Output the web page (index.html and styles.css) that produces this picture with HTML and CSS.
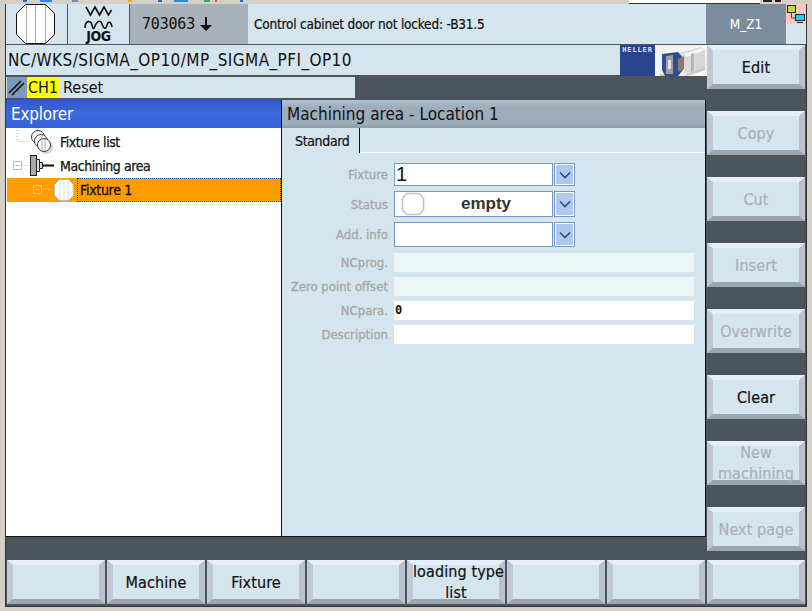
FILE: index.html
```html
<!DOCTYPE html>
<html lang="en">
<head>
    <title>Machining area</title>
    <link rel="stylesheet" href="styles.css">
</head>
<body>
    <svg class="strip" width="812" height="4" viewBox="0 0 812 4">
        <rect x="23" width="4" height="2" fill="#2a6ad0"/>
        <rect x="40" width="12" height="2" fill="#2a8ae8"/>
        <rect x="72" width="6" height="2" fill="#7a90b8"/>
        <rect x="128" width="4" height="2" fill="#f0a820"/>
        <rect x="158" width="4" height="2" fill="#3060c0"/>
        <rect x="174" width="14" height="2" fill="#2a8ae8"/>
        <rect x="204" width="6" height="2" fill="#40a060"/>
        <rect x="215" width="2" height="2" fill="#e06030"/>
        <rect x="240" width="3" height="2" fill="#2a6ad0"/>
        <rect x="629" y="0" width="131" height="3" fill="#fff"/>
        <rect x="629" y="3" width="131" height="1" fill="#333"/>
        <rect x="763" width="9" height="2" fill="#222"/>
        <rect x="775" width="6" height="2" fill="#401010"/>
    </svg>

    <div class="window">
        <div class="topbar">
            <div class="cell cell-fixture">
                <svg width="42" height="40" viewBox="0 0 42 40">
                    <path d="M10.5 .5h20l9 9v21l-9 9h-20l-9-9v-21z" fill="#fff" stroke="#111"/>
                    <path d="M11.5 1v38M20.5 1v38M30.5 1v38" stroke="#aaa"/>
                </svg>
            </div>
            <div class="cell cell-jog">
                <svg class="jog-wave" width="30" height="25" viewBox="0 0 30 25">
                    <path d="M2 2l4.500 8 4.500-8 4.500 8 4.500-8 4.500 8 3-5" fill="none" stroke="#111" stroke-width="1.600"/>
                    <path d="M1 23c0-8 6-8 7-3s2 4 3 1 5-8 7-2 4 5 5 1 4-4 5 2" fill="none" stroke="#111" stroke-width="1.600"/>
                </svg>
                <span class="jog-text">JOG</span>
            </div>
            <div class="cell cell-number">
                <span class="number">703063</span>
                <svg width="12" height="14" viewBox="0 0 12 14"><path d="M5 0h2v8h5l-6 6-6-6h5z" fill="#111"/></svg>
            </div>
            <div class="cell cell-message">Control cabinet door not locked: -B31.5</div>
            <div class="cell cell-user">M_Z1</div>
            <div class="cell cell-net">
                <svg width="20" height="20" viewBox="0 0 20 20">
                    <rect width="20" height="20" fill="#ffc4c4"/>
                    <rect x="1.5" y="1.5" width="8" height="7" fill="#b4e040" stroke="#222"/>
                    <path d="M5.500 9v5h4" fill="none" stroke="#d01010"/>
                    <rect x="9.500" y="10.500" width="9" height="6" fill="#10d8f0" stroke="#222"/>
                    <path d="M11 18.500h6" stroke="#222"/>
                </svg>
            </div>
        </div>

        <div class="middle">
            <div class="work">
                <div class="pathrow">
                    <span class="path">NC/WKS/SIGMA_OP10/MP_SIGMA_PFI_OP10</span>
                    <div class="logo">
                        <div class="logo-blue">HELLER</div>
                        <svg class="logo-pic" width="52" height="31" viewBox="0 0 52 31">
                            <rect width="52" height="31" fill="#f4f4f4"/>
                            <path d="M4 29l24 2 22-10v4l-18 6H6z" fill="#c8c8c8"/>
                            <path d="M24 8l22-6 4 3v17l-20 7z" fill="#d8d8d8"/>
                            <path d="M28 9l18-6 4 2-18 7z" fill="#f4f4f4"/>
                            <path d="M36 9l3-1v18l-3 1z" fill="#b4b4b4"/>
                            <path d="M7 9l16-2 5 6v12l-5 6H10l-3-6z" fill="#2c4f9c"/>
                            <path d="M11 11l7-1v19h-7z" fill="#a89c98"/>
                            <path d="M13 15h3v9h-3z" fill="#e4e4e4"/>
                            <path d="M23 14l6-3v13l-6 3z" fill="#8a7a70"/>
                        </svg>
                    </div>
                </div>

                <div class="statusrow">
                    <span class="slash">
                        <svg width="19" height="21" viewBox="0 0 19 21"><path d="M2 16L14 4M5 18L17 6" stroke="#111" stroke-width="1.600"/></svg>
                    </span>
                    <span class="channel">CH1</span>
                    <span class="reset">Reset</span>
                </div>

                <div class="panes">
                    <div class="explorer">
                        <div class="explorer-title">Explorer</div>
                        <ul class="tree">
                            <li class="tree-row">
                                <svg width="50" height="24" viewBox="0 0 50 24">
                                    <path d="M7 0v11.500h13" fill="none" stroke="#bbb" stroke-dasharray="1 2"/>
                                    <circle cx="36" cy="17" r="7" fill="#aaa" opacity=".5"/>
                                    <circle cx="28" cy="7" r="6.500" fill="#fff" stroke="#333"/>
                                    <circle cx="31" cy="11" r="6.500" fill="#fff" stroke="#333"/>
                                    <circle cx="34" cy="15" r="6.500" fill="#fff" stroke="#333"/>
                                    <path d="M32 9v12M35 9v12" stroke="#aaa"/>
                                </svg>
                                <span class="tree-text">Fixture list</span>
                            </li>
                            <li class="tree-row">
                                <svg width="50" height="24" viewBox="0 0 50 24">
                                    <rect x="3.500" y="7.500" width="8" height="8" fill="#fff" stroke="#bbb"/>
                                    <path d="M5.500 11.500h4" stroke="#bbb"/>
                                    <path d="M12 11.500h8" stroke="#bbb" stroke-dasharray="1 2"/>
                                    <rect x="20.500" y="1.500" width="6" height="20" fill="#aaa" stroke="#222"/>
                                    <path d="M26.500 5.500h3v12h-3zM29.500 8.500h3v6h-3z" fill="#ddd" stroke="#222"/>
                                    <path d="M32 11.500h12" stroke="#111" stroke-width="2"/>
                                </svg>
                                <span class="tree-text">Machining area</span>
                            </li>
                            <li class="tree-row tree-row-active">
                                <svg width="70" height="24" viewBox="0 0 70 24">
                                    <path d="M31 0v7" stroke="#ddb070" stroke-dasharray="1 2"/>
                                    <rect x="26.500" y="7.500" width="8" height="8" fill="none" stroke="#ffc880"/>
                                    <path d="M28.500 11.500h4" stroke="#ffc880"/>
                                    <path d="M35 11.500h10" stroke="#ffc880" stroke-dasharray="1 2"/>
                                    <path d="M52.500 1.500h9l5 5v11l-5 5h-9l-5-5v-11z" fill="#fff" stroke="#bbb"/>
                                    <path d="M53 2v20M57 2v20M61 2v20" stroke="#ddd"/>
                                </svg>
                                <span class="focus">Fixture 1</span>
                            </li>
                        </ul>
                    </div>

                    <div class="details">
                        <div class="details-title">Machining area - Location 1</div>
                        <div class="tabs">
                            <span class="tab">Standard</span>
                            <span class="tab-rest"></span>
                        </div>
                        <div class="form">
                            <div class="field field-select">
                                <label class="field-label">Fixture</label>
                                <div class="select"><span class="select-value select-big">1</span></div>
                                <span class="select-btn"><svg width="12" height="8" viewBox="0 0 12 8"><path d="M1 1.500l5 5 5-5" fill="none" stroke="#2c4a80" stroke-width="1.600"/></svg></span>
                            </div>
                            <div class="field field-select field-status">
                                <label class="field-label">Status</label>
                                <div class="select">
                                    <svg class="status-icon" width="24" height="24" viewBox="0 0 24 24"><path d="M6 1.500h12l4.500 4.500v12l-4.500 4.500h-12l-4.500-4.500v-12z" fill="#fff" stroke="#bcc4cc" stroke-width="1.600"/></svg>
                                    <span class="select-value select-bold">empty</span>
                                </div>
                                <span class="select-btn"><svg width="12" height="8" viewBox="0 0 12 8"><path d="M1 1.500l5 5 5-5" fill="none" stroke="#2c4a80" stroke-width="1.600"/></svg></span>
                            </div>
                            <div class="field field-select field-info">
                                <label class="field-label">Add. info</label>
                                <div class="select"></div>
                                <span class="select-btn"><svg width="12" height="8" viewBox="0 0 12 8"><path d="M1 1.500l5 5 5-5" fill="none" stroke="#2c4a80" stroke-width="1.600"/></svg></span>
                            </div>
                            <div class="plain-fields">
                                <div class="field">
                                    <label class="field-label">NCprog.</label>
                                    <div class="box box-off"></div>
                                </div>
                                <div class="field">
                                    <label class="field-label">Zero point offset</label>
                                    <div class="box box-off"></div>
                                </div>
                                <div class="field">
                                    <label class="field-label">NCpara.</label>
                                    <div class="box"><span class="zero">0</span></div>
                                </div>
                                <div class="field">
                                    <label class="field-label">Description</label>
                                    <div class="box"></div>
                                </div>
                            </div>
                        </div>
                    </div>
                </div>
            </div>

            <div class="softkeys-right">
                <button class="softkey">Edit</button>
                <button class="softkey off">Copy</button>
                <button class="softkey off">Cut</button>
                <button class="softkey off">Insert</button>
                <button class="softkey off">Overwrite</button>
                <button class="softkey">Clear</button>
                <button class="softkey off"><span class="two-lines">New<br>machining</span></button>
                <button class="softkey off">Next page</button>
            </div>
        </div>

        <div class="softkeys-bottom">
            <button class="softkey"></button>
            <button class="softkey">Machine</button>
            <button class="softkey">Fixture</button>
            <button class="softkey"></button>
            <button class="softkey"><span class="two-lines">loading type<br>list</span></button>
            <button class="softkey"></button>
            <button class="softkey"></button>
            <button class="softkey"></button>
        </div>
    </div>
</body>
</html>
```

FILE: styles.css
```css
* {
    box-sizing: border-box;
    margin: 0;
    padding: 0;
}

body {
    background-color: #d4d0c8;
    font-family: "DejaVu Sans Condensed", "DejaVu Sans", sans-serif;
    font-stretch: condensed;
    font-size: 14px;
    color: #111;
    overflow: hidden;
}

.strip {
    display: block;
}

.window {
    width: 802px;
    height: 603px;
    margin-left: 5px;
    background-color: #4c545c;
    border: 1px solid #333;
    border-top: 0;
}

/* top bar */
.topbar {
    display: flex;
    height: 41px;
    background-color: #d5e5ee;
    border-bottom: 1px solid #4c545c;
}

.cell {
    display: flex;
    align-items: center;
}

.cell-fixture {
    width: 62px;
    padding-left: 9px;
    border-right: 1px solid #4c545c;
}

.cell-jog {
    width: 62px;
    flex-direction: column;
    border-right: 1px solid #4c545c;
    line-height: 1;
}

.jog-wave {
    display: block;
    margin-top: 1px;
}

.jog-text {
    font-size: 14px;
    font-weight: bold;
    letter-spacing: -.4px;
    margin-top: -1px;
}

.cell-number {
    width: 118px;
    padding-left: 12px;
    gap: 5px;
    background-color: #a9b2ba;
}

.number {
    font-family: "DejaVu Sans Mono", monospace;
    font-size: 15px;
    letter-spacing: -.2px;
}

.cell-message {
    width: 458px;
    padding-left: 6px;
    font-size: 13.5px;
    letter-spacing: -.2px;
    -webkit-text-stroke: .2px #111;
}

.cell-user {
    width: 80px;
    justify-content: center;
    background-color: #7b8c9c;
    color: #fff;
    font-size: 13.5px;
}

.cell-net {
    width: 20px;
    align-items: flex-start;
}

/* middle */
.middle {
    display: grid;
    grid-template-columns: 700px 100px;
    height: 515px;
}

.pathrow {
    display: flex;
    justify-content: space-between;
    height: 31px;
    background-color: #d5e5ee;
    padding-left: 2px;
    border-bottom: 1px solid #4c545c;
}

.path {
    font-size: 17px;
    line-height: 30px;
    letter-spacing: .43px;
}

.logo {
    display: flex;
    height: 31px;
    margin-right: -1px;
}

.logo-blue {
    width: 35px;
    background-color: #2a4590;
    color: #dfe6f5;
    font-family: "DejaVu Sans Mono", monospace;
    font-stretch: normal;
    font-size: 7px;
    font-weight: bold;
    line-height: 10px;
    letter-spacing: .9px;
    text-align: center;
}

.logo-pic {
    display: block;
}

.statusrow {
    display: flex;
    align-items: stretch;
    width: 349px;
    height: 21px;
    margin-top: 1px;
    background-color: #d5e5ee;
}

.slash {
    width: 20px;
    margin-left: 1px;
    background-color: #7b9abb;
}

.channel {
    width: 32px;
    background-color: #ffff00;
    font-size: 16px;
    line-height: 21px;
    text-align: center;
}

.reset {
    margin-left: 4px;
    font-size: 16px;
    line-height: 21px;
}

.panes {
    display: grid;
    grid-template-columns: 276px 424px;
    height: 437px;
    margin-top: 2px;
}

/* explorer */
.explorer {
    display: flex;
    flex-direction: column;
    background-color: #fff;
    border-right: 1px solid #111;
    border-bottom: 1px solid #111;
}

.explorer-title {
    height: 28px;
    background: linear-gradient(#3158d0, #3e68dc 50%, #3660d8);
    color: #fff;
    font-size: 17px;
    line-height: 28px;
    padding-left: 5px;
    letter-spacing: -.2px;
}

.tree {
    list-style: none;
    padding-top: 2px;
}

.tree-row {
    display: flex;
    align-items: center;
    height: 24px;
    padding-left: 4px;
    font-size: 14px;
}

.tree-text {
    letter-spacing: -.45px;
    -webkit-text-stroke: .25px #111;
}

.tree-row-active {
    margin-left: 1px;
    padding-left: 0;
    background-color: #ff9c00;
}

.focus {
    flex: 1;
    height: 24px;
    line-height: 22px;
    padding-left: 2px;
    border: 1px dotted #2050a0;
    letter-spacing: -.3px;
    -webkit-text-stroke: .3px #111;
}

/* details */
.details {
    display: flex;
    flex-direction: column;
    background-color: #d5e5ee;
    border-right: 1px solid #111;
    border-bottom: 1px solid #111;
    width: 424px;
}

.details-title {
    height: 28px;
    background: linear-gradient(#b4c2cf, #9dadbc 25%, #9dadbc 85%, #8b9cac);
    font-size: 17px;
    line-height: 28px;
    padding-left: 5px;
}

.tabs {
    display: flex;
    height: 25px;
}

.tab {
    width: 78px;
    padding-left: 13px;
    line-height: 26px;
    font-size: 14px;
    letter-spacing: -.35px;
    -webkit-text-stroke: .2px #111;
    border-right: 1px solid #111;
}

.tab-rest {
    flex: 1;
    border-bottom: 1px solid #fff;
}

.form {
    padding-top: 10px;
}

.field {
    display: flex;
    align-items: stretch;
    height: 19px;
}

.field-select {
    height: 23px;
    margin-bottom: 5px;
}

.field-status {
    height: 26px;
}

.field-info {
    height: 25px;
    margin-bottom: 6px;
}

.field-label {
    display: flex;
    align-items: center;
    justify-content: flex-end;
    width: 106px;
    margin-right: 6px;
    color: #a6a6a6;
    -webkit-text-stroke: .3px #a6a6a6;
    font-size: 13px;
    white-space: nowrap;
}

.select {
    display: flex;
    align-items: center;
    width: 159px;
    background-color: #fff;
    border: 1px solid #7898c0;
}

.select-value {
    padding-left: 1px;
}

.select-big {
    font-family: "Liberation Sans", sans-serif;
    font-size: 20px;
}

.select-bold {
    flex: 1;
    padding-right: 6px;
    font-family: "Liberation Sans", sans-serif;
    font-stretch: normal;
    font-size: 17px;
    font-weight: bold;
    text-align: center;
    color: #333;
}

.status-icon {
    margin-left: 6px;
}

.select-btn {
    display: flex;
    align-items: center;
    justify-content: center;
    width: 21px;
    margin-left: 1px;
    background-color: #b0c8f0;
    border: 1px solid #7898c0;
    box-shadow: inset 0 0 0 1px #fff;
}

.plain-fields {
    display: flex;
    flex-direction: column;
    gap: 5px;
}

.box {
    width: 300px;
    background-color: #fff;
}

.box-off {
    background-color: #edf6f6;
}

.zero {
    display: block;
    padding-left: 1px;
    font-family: "DejaVu Sans Mono", monospace;
    font-size: 12px;
    font-weight: bold;
    line-height: 19px;
}

/* softkeys */
.softkey {
    display: block;
    width: 98px;
    height: 44px;
    padding: 0;
    background-color: #d5e5ee;
    border-style: solid;
    border-width: 5px 6px;
    border-color: #e6eefa #b8c2ce #9aa6b4 #c0c8d4;
    font-family: inherit;
    font-stretch: condensed;
    font-size: 16px;
    line-height: 21px;
    color: #111;
    white-space: nowrap;
    letter-spacing: .1px;
    -webkit-text-stroke: .2px #111;
}

.two-lines {
    display: block;
    margin-top: -4px;
}

.off {
    color: #a8b0b8;
    -webkit-text-stroke: .2px #a8b0b8;
}

.softkeys-right {
    display: flex;
    flex-direction: column;
    gap: 22px;
    padding-left: 1px;
}

.softkeys-bottom {
    display: flex;
    gap: 2px;
    padding-left: 1px;
}
```
